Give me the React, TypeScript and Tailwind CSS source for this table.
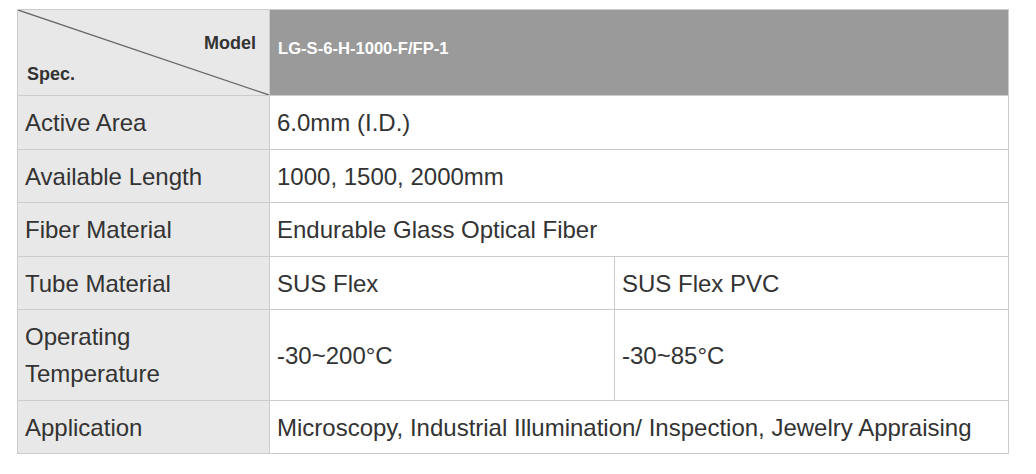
const rows: { label: string; cells: string[] }[] = [
  { label: "Active Area", cells: ["6.0mm (I.D.)"] },
  { label: "Available Length", cells: ["1000, 1500, 2000mm"] },
  { label: "Fiber Material", cells: ["Endurable Glass Optical Fiber"] },
  { label: "Tube Material", cells: ["SUS Flex", "SUS Flex PVC"] },
  { label: "Operating Temperature", cells: ["-30~200°C", "-30~85°C"] },
  {
    label: "Application",
    cells: ["Microscopy, Industrial Illumination/ Inspection, Jewelry Appraising"],
  },
];

const cell = "border border-[#ccc] px-[7px] pt-[8px] pb-[7.5px] text-[24px] leading-[37px]";

export default function App() {
  return (
    <div className="bg-white w-[1036px] h-[474px] pt-[9px] pl-[17px] font-['Liberation_Sans',Arial,sans-serif] text-[#333]">
      <table className="border-collapse w-[992px] table-fixed">
        <colgroup>
          <col className="w-[252px]" />
          <col className="w-[345px]" />
          <col />
        </colgroup>
        <thead>
          <tr className="h-[86px]">
            <th className="relative border border-[#ccc] bg-[#e8e8e8] p-0 font-bold text-[18px]">
              <svg
                className="absolute inset-0 w-full h-full"
                preserveAspectRatio="none"
                viewBox="0 0 100 100"
              >
                <line
                  x1="0"
                  y1="0"
                  x2="100"
                  y2="100"
                  stroke="#666"
                  strokeWidth="1.3"
                  vectorEffect="non-scaling-stroke"
                />
              </svg>
              <div className="relative flex flex-col h-[85px] pl-[9px] pr-[13px] pt-[23px]">
                <span className="self-end leading-[20px]">Model</span>
                <span className="self-start leading-[20px] mt-[11px]">Spec.</span>
              </div>
            </th>
            <th
              colSpan={2}
              className="border border-[#ccc] bg-[#9a9a9a] text-white text-left font-bold text-[16.6px] px-[8px] pb-[6px]"
            >
              LG-S-6-H-1000-F/FP-1
            </th>
          </tr>
        </thead>
        <tbody>
          {rows.map((r) => (
            <tr key={r.label}>
              <td className={`${cell} bg-[#e8e8e8]`}>
                {r.label === "Operating Temperature" ? (
                  <>
                    Operating
                    <br />
                    Temperature
                  </>
                ) : (
                  r.label
                )}
              </td>
              {r.cells.length === 1 ? (
                <td colSpan={2} className={cell}>
                  {r.cells[0]}
                </td>
              ) : (
                r.cells.map((c) => (
                  <td key={c} className={cell}>
                    {c}
                  </td>
                ))
              )}
            </tr>
          ))}
        </tbody>
      </table>
    </div>
  );
}
